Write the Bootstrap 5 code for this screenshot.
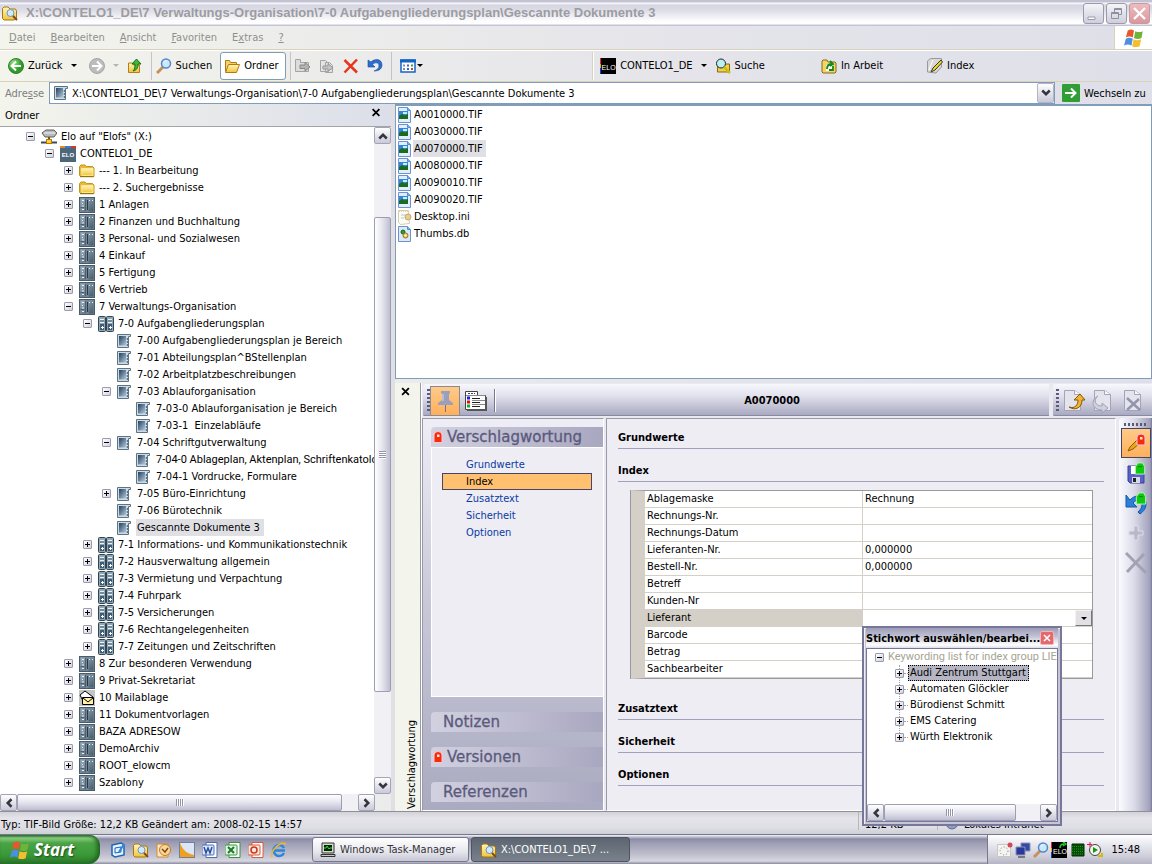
<!DOCTYPE html>
<html lang="de">
<head>
<meta charset="utf-8">
<meta name="viewport" content="width=device-width, initial-scale=1">
<title>Gescannte Dokumente 3</title>
<link href="https://cdn.jsdelivr.net/npm/bootstrap@5.3.0/dist/css/bootstrap.min.css" rel="stylesheet">
<style>
:root{--ui:"DejaVu Sans Condensed","DejaVu Sans",sans-serif;--blue:#7f9db9;--sand:#d8d2bd;}
body{font:11px/17px var(--ui);color:#000;background:linear-gradient(90deg,#f3f4ec 0%,#e4e4ea 60%,#dfdfe9 100%);height:100vh;overflow:hidden;white-space:nowrap}
button,select,input{font:inherit;color:inherit}
button{border:0;background:none;padding:0}
a{color:inherit;text-decoration:none}
ul{list-style:none;margin:0;padding:0}
svg{display:block;flex:none}
.ic{width:16px;height:16px}
.ic20{width:20px;height:20px}
.ic24{width:24px;height:24px}
.narrow{font-family:Roboto,sans-serif}
/* ELO logos: slate one in the tree, black one in the tool bar and the tray */
.elo{display:block;flex:none;text-align:center;color:#fff;font:bold 6px/18px "Liberation Sans",Arial,sans-serif;background:linear-gradient(90deg,#e58a1c 5px,#3c78d0 5px 11px,#d43a1c 11px) top/100% 2px no-repeat #4d6678}
.elo.dark{font:7px/20px "Liberation Sans",Arial,sans-serif;padding-left:1px;background:linear-gradient(#e02a2a 6px,#f0b000 6px 10px,#2038d0 10px) left/1px 100% no-repeat #000}
.elo.synced{position:relative}
.elo.synced svg{position:absolute;right:0;top:0}
/* window frame */
.titlebar{height:26px;padding:0 2px;background:linear-gradient(#c2c2d2 0,#c2c2d2 2px,#fff 3px,#d6d6e2 5px,#dcdce6 10px,#fdfdfe 21px,#fff 24px,#c4c4d6 25px);color:#9c9ca2;font:bold 13px/26px "Liberation Sans",Arial,sans-serif}
.titlebar .caption{padding-left:8px}
.titlebar .caps{gap:2px}
.capbtn{width:21px;height:21px;border:1px solid #9a9aae;border-radius:3px;background:linear-gradient(#f4f4f8,#cfcfdb)}
.capbtn.shut{background:linear-gradient(#eebcc0,#d9979c);border-color:#c69aa4}
.menubar{height:24px;border-bottom:1px solid var(--sand);box-shadow:0 1px 0 #fff;color:#8f8f8f}
.menubar ul{gap:15px;padding-left:9px}
.winflag{width:38px;background:#fff;border-left:1px solid var(--sand)}
.toolbar{height:32px;border-bottom:1px solid var(--sand)}
.toolbar .first{width:51.4%;padding-left:8px}
.toolbar .second{border-left:1px solid var(--sand);box-shadow:inset 1px 0 0 #fff;padding-left:7px}
.tb{height:28px;display:flex;align-items:center;gap:4px}
.tb.on{border:1px solid var(--blue);border-radius:3px;background:#fff;padding:0 6px 0 3px;margin-left:8px}
.tb.wide{margin-left:44px}
.vsep{width:1px;height:28px;background:#c3c3cb}
.caret{width:0;border:3px solid transparent;border-top-color:#000;border-bottom:0}
.caret.dim{border-top-color:#b5b5b5}
.caret.near{margin-left:-3px}
.address{height:22px}
.address label{width:49px;padding-left:5px;color:#7d7d7d}
.addrbox{border:1px solid var(--blue);background:#fff;height:22px}
.addrbox input{border:0;outline:0;background:none;min-width:0;padding:0 0 0 2px}
.drop{width:17px;height:20px;border:1px solid #b4b4c4;border-radius:2px;background:linear-gradient(#fff,#c9c9d8)}
.go{width:97px;padding-left:7px;gap:4px}
/* folder tree */
.folders{width:391px}
.folders h2{font:inherit;height:23px;line-height:24px;padding:0 7px 0 5px;margin:0;border-bottom:1px solid #a4a4a8;background:linear-gradient(90deg,#f3f4ec,#dcdfe9)}
.folders h2 button{height:17px}
.treebox{background:#fff;min-height:0}
.tree{overflow:hidden;padding-top:1px}
.tree li{height:17px;display:flex;align-items:center}
.tree li .ic{margin:0 3px 0 6px}
.tree a{padding:0 4px 0 1px}
.tree a.sel,.files a.sel{background:#dfdfe4}
.lv0{padding-left:26px}.lv1{padding-left:45px}.lv2{padding-left:64px}.lv3{padding-left:83px}.lv4{padding-left:102px}.lv5{padding-left:121px}
.pm{width:9px;height:9px;flex:none;border:1px solid #9a9ab0;border-radius:1px;background:linear-gradient(#000,#000) center/5px 1px no-repeat,linear-gradient(135deg,#fff,#d2d2dc)}
.pm.p{background:linear-gradient(#000,#000) center/5px 1px no-repeat,linear-gradient(#000,#000) center/1px 5px no-repeat,linear-gradient(135deg,#fff,#d2d2dc)}
.pm.n{visibility:hidden}
.sbtn{width:17px;height:17px;flex:none;display:grid;place-items:center;border:1px solid #a4a4b6;border-radius:2px;background:linear-gradient(#fff,#c9c9d9)}
.sbtn.up svg{rotate:180deg}.sbtn.left svg{rotate:90deg}.sbtn.right svg{rotate:-90deg}
.vs{width:17px;background:#f0f0f5}
.vs .gap1{flex:73}.vs .gap2{flex:85}
.vs .thumb{flex:474;border:1px solid #9e9eb2;border-radius:2px;background:linear-gradient(90deg,#fff,#e4e4ee 50%,#bebed2)}
.hs{height:17px;background:#f0f0f5}
.hs .thumb{border:1px solid #9e9eb2;border-radius:2px;background:linear-gradient(#fff,#e4e4ee 50%,#bebed2)}
.grip{width:8px;height:7px;background:repeating-linear-gradient(90deg,#9494a6 0 1px,#fff 1px 2px)}
.grip.h{width:7px;height:8px;background:repeating-linear-gradient(#9494a6 0 1px,#fff 1px 2px)}
.splitter{width:4px;flex:none;background:#e0dfe3}
/* file list */
.files{background:#fff;border:1px solid var(--blue);border-top-width:2px;overflow:hidden}
.files li{height:17px;display:flex;align-items:center;padding-left:1px}
.files a{padding:0 3px 0 1px}
/* document panel */
.docpanel{margin-top:4px}
.strip{width:25px;background:#f3f4ec}
.strip span{writing-mode:vertical-rl;transform:rotate(180deg);line-height:17px;margin-left:8px;margin-bottom:2px}
.panelwrap{border-left:1px solid #9a9aa6;box-shadow:inset 1px 0 0 #fff;padding-left:1px;background:#e9e9f2}
.bars{height:35px;padding:1px 0 1px 1px}
.bar{height:33px;border-radius:3px 0 0 3px;background:linear-gradient(#f7f7fd,#e2e2ee 35%,#a9a9c1 94%,#7d7d98 96%,#e9e9f2 98%)}
.bar .doctitle{font-weight:bold;margin-right:249px}
.bar .vsep{height:23px;background:#77778f;box-shadow:1px 0 0 #fff}
.bar.end{width:99px;margin-left:4px;padding-left:3px}
.dots{width:3px;height:24px;background:repeating-linear-gradient(#5a5a7a 0 2px,transparent 2px 4px)}
.dots.h{width:24px;height:3px;margin-bottom:2px;background:repeating-linear-gradient(90deg,#5a5a7a 0 2px,transparent 2px 4px)}
.tool{width:30px;height:30px;display:grid;place-items:center;flex:none}
.tool.on{border:1px solid #8a8a96;background:linear-gradient(#ffca88,#feb05c)}
.nav-side{width:182px;border:1px solid #fff;border-top-color:#9a9aa6;border-left-color:#9a9aa6;padding:8px 0 8px 8px;background:linear-gradient(#efeef6,#c9c9da 45%,#aaaac0)}
.nav-side h3{font:15px/22px "DejaVu Sans",Verdana,sans-serif;height:20px;margin:0;color:#5b5a7c;background:linear-gradient(90deg,#d2d1e0,#a8a7c0);border-radius:4px 0 0 0;padding-left:12px;display:flex;align-items:center;-webkit-text-stroke:.3px #5b5a7c}
.nav-side h3.locked{padding-left:2px}
.nav-side h3 svg{margin-right:4px}
.nav-side .links{border:1px solid #fff;border-right:0;background:#eeedf4;padding:8px 11px 0 10px;margin-bottom:15px}
.nav-side .links a{display:block;height:17px;line-height:17px;padding-left:24px;color:#0a3aa4}
.nav-side .links a.cur{border:1px solid #45456a;padding-left:23px;line-height:15px;background:#ffc070;color:#000}
.nav-side .stack{gap:15px}
.details{margin-left:2px;border:1px solid #fff;border-top-color:#9a9aa6;border-left-color:#9a9aa6;background:#eeedf4;padding:7px 11px 24px 11px}
.details h4{font:bold 11px/24px var(--ui);height:23px;margin:0 0 10px;border-bottom:1px solid #a2a1bd}
.props{width:calc(100% - 24px);margin:-2px 0 18px 13px;border-collapse:separate;border-spacing:0;border:1px solid #9a9a9e;border-left:14px solid #d4d0c8;table-layout:fixed;background:#fff;box-shadow:-1px 0 0 #9a9a9e}
.props th,.props td{height:17px;line-height:16px;padding:0 0 0 2px;font-weight:normal;border-bottom:1px solid #d4d0c8}
.props th{width:218px;border-right:1px solid #d4d0c8}
.props tr.cur th{background:#d4d0c8}
.props select{appearance:none;width:100%;height:16px;border:0;border-radius:0;padding:0;outline:0;background:#fff}
.props .combo{position:relative}
.props .knob{position:absolute;right:0;top:0;width:17px;height:16px;display:grid;place-items:center;pointer-events:none;background:#e2e0e4;border:1px solid;border-color:#f2f2f2 #77777c #77777c #f2f2f2}
.side-tools{width:33px;margin-left:3px;padding-top:5px;border-radius:4px 0 0 0;background:linear-gradient(90deg,#fafaff,#dcdce9 45%,#a0a0ba 94%,#77779a)}
.side-tools .tool.on{border-color:#45456a}
/* status bar and taskbar */
.status{height:23px;border-top:1px solid #8f8f98;background:linear-gradient(#d2d2d8,#e4e4ea 6px,#dedee5 70%,#cfcfd6)}
.status .hint{padding-left:1px}
.status .cell{border-left:1px solid #bdb9a8;padding-left:6px;height:18px}
.status .size{width:79px}.status .zone{width:215px}
.taskbar{height:30px;border-top:1px solid #77778f;background:linear-gradient(#f3f3f8 0,#8b8ba6 4px,#9e9eb4 8px,#c0c0cf 20px,#d8d8e0 26px,#8888a0 29px)}
.start{width:100px;height:29px;border-radius:0 10px 12px 0;background:linear-gradient(#2f7a2d 0,#8ed083 3px,#4aa445 8px,#3a9837 20px,#2c7a2b 28px);box-shadow:inset -3px 0 4px #1f6420;color:#fff;font:italic bold 17px/26px "Open Sans",sans-serif;text-shadow:1px 1px 2px #1a4a1a;padding-left:10px;gap:4px}
.quick{gap:7px;padding-left:10px;width:212px}
.task{width:157px;height:25px;border:1px solid #77778c;border-radius:3px;background:linear-gradient(#fff,#e6e6ee 60%,#c6c6d4);gap:4px;padding-left:7px;color:#333;margin-right:2px}
.task.act{width:159px;background:linear-gradient(#5c6570,#79828c);border-color:#4c5560;color:#fff;padding-left:9px}
.tray{border-left:1px solid #77778f;background:linear-gradient(#fff,#eaeaf1 30%,#cdcdd9 75%,#b4b4c4);padding:0 12px 0 9px;gap:2px}
.tray time{margin-left:6px}
/* keyword window */
.keywords{position:absolute;right:90px;bottom:38px;width:200px;height:200px;border:2px solid #77779a;background:#c6c6d6;padding:0 2px 2px;box-shadow:inset 1px 1px 0 #eeeef6}
.keywords header{height:20px;font-weight:bold;background:linear-gradient(#9c9cb8,#c0c0d2 8px,#fff 17px,#dcdce8)}
.keywords .shut{width:14px;height:14px;border:1px solid #f5b5b5;border-radius:2px;background:#e4686c;color:#fff;display:grid;place-items:center}
.keywords .body{border:1px solid #77779a;background:#fff;overflow:hidden}
.keywords li{height:16px;line-height:16px;display:flex;align-items:center}
.keywords .root{color:#a5a493}
.keywords .subs{position:relative;margin-left:20px}
.keywords .subs::before{content:"";position:absolute;left:4px;top:0;height:72px;border-left:1px dotted #a4a4a4}
.keywords .subs li::after{content:"";order:1;width:4px;border-top:1px dotted #a4a4a4}
.keywords .subs .pm{position:relative}
.keywords .subs a{order:2;padding:0 3px 0 2px;height:16px;line-height:15px}
.keywords .subs a.sel{background:#b5b5c3;outline:1px dotted #000;outline-offset:-1px}
</style>
</head>
<body class="d-flex flex-column">
<svg width="0" height="0" class="position-absolute" aria-hidden="true">
<defs>
<linearGradient id="gy" x1="0" y1="0" x2="0" y2="1"><stop offset="0" stop-color="#fff6b8"/><stop offset="1" stop-color="#f2c33c"/></linearGradient>
<linearGradient id="gs" x1="0" y1="0" x2="1" y2="1"><stop offset="0" stop-color="#9fb4c2"/><stop offset="1" stop-color="#46596a"/></linearGradient>
<linearGradient id="gd" x1="0" y1="0" x2="1" y2="1"><stop offset="0" stop-color="#24405c"/><stop offset="1" stop-color="#b4c8da"/></linearGradient>
<radialGradient id="gg" cx=".35" cy=".3"><stop offset="0" stop-color="#9be08a"/><stop offset="1" stop-color="#2e9a2a"/></radialGradient>
</defs>
<symbol id="fold" viewBox="0 0 16 16"><path d="M.5 12.500V3.500l1.500-1.500h4l1.500 1.500h6l1.500 1.500v8.500H1.500z" fill="#e8b93a" stroke="#c2951f"/><path d="M2.500 5.500h11.500v7H3z" fill="url(#gy)" stroke="#fff3a0" stroke-width=".8"/><path d="M1 13.700h13.500" stroke="#8a6a10"/></symbol>
<symbol id="cab" viewBox="0 0 16 16"><rect x=".5" y=".5" width="15" height="15" fill="#6f8798" stroke="#4a5c6a"/><path d="M1.500 1.500h5v13h-5zM9.500 1.500h5v13h-5z" fill="url(#gs)"/><path d="M8.500 3v10" stroke="#2a3844"/><path d="M6.500 2v12M1.500 10.500h4" stroke="#4c6070"/><path d="M3 3.500h2M3 6.500h1M3 12.500h2M10 3.500h1M13 3.500h1M3 9h2" stroke="#e8f0f6"/></symbol>
<symbol id="reg" viewBox="0 0 16 16"><rect x=".5" y=".5" width="7" height="15" rx="1" fill="#8fa6b5" stroke="#33444f"/><rect x="8.500" y=".5" width="7" height="15" rx="1" fill="#8fa6b5" stroke="#33444f"/><path d="M2 3.500h4M2 6.500h4M10 3.500h4M10 6.500h4" stroke="#e8f2f8"/><path d="M2 5h4M10 5h4" stroke="#5a7080"/><path d="M2 8h4v6H2zM10 8h4v6h-4z" fill="#3f5c78"/><path d="M3 11.500h3M4.500 10v3M11 11.500h3M12.500 10v3" stroke="#fff"/></symbol>
<symbol id="doc" viewBox="0 0 16 16"><path d="M.5 1.500h13v2h-2v11H.5z" fill="#c9dcea" stroke="#5f7282"/><path d="M2 3h7v9.500H2z" fill="url(#gd)"/><path d="M10.500 5v9" stroke="#5d7384" stroke-width="1.500" stroke-dasharray="2 1"/></symbol>
<symbol id="drive" viewBox="0 0 16 16"><path d="M1 4l4-3h8l3 3-3 4H4z" fill="#b9b9b9" stroke="#5c5c5c"/><path d="M3 4h11" stroke="#f2f2f2"/><path d="M8 8v4" stroke="#555" stroke-width="2"/><path d="M0 13.500h16" stroke="#3a4a5a" stroke-width="2"/><rect x="5.500" y="10.500" width="5" height="4" fill="#ffcf30" stroke="#b07c00"/></symbol>
<symbol id="mail" viewBox="0 0 16 16"><path d="M0 0h16v16H0z" fill="#c4c4c4"/><path d="M1 5l5-4 8 6-3 4H4z" fill="#fff" stroke="#000"/><path d="M3.500 7.500h11v7h-11z" fill="#fff2a8" stroke="#000"/><path d="M4 8l5 4 5-4" fill="none" stroke="#000"/></symbol>
<symbol id="tif" viewBox="0 0 16 16"><path d="M1.500.5h9l3 3v12h-12z" fill="#e2edfd" stroke="#6f92cc"/><path d="M10.500.5v3h3" fill="#6fb8ff" stroke="#4c90dc"/><path d="M2 4h9v8H2z" fill="#2f86dc"/><path d="M2 9l3-2 3 1.500 3-1.500v5H2z" fill="#1c6b1c"/><path d="M6 5h4v2H6z" fill="#c9ecff"/></symbol>
<symbol id="ini" viewBox="0 0 16 16"><path d="M1.500 1.500h10l1 13-9 1-2-2z" fill="#fdfcf4" stroke="#d4ccb8"/><path d="M2 2h9" stroke="#e3cf8e" stroke-dasharray="1 1" stroke-width="2"/><circle cx="11" cy="8" r="3" fill="#e6cc98" stroke="#c6a868"/><path d="M4 6h4M4 9h3" stroke="#b8c4dc"/></symbol>
<symbol id="db" viewBox="0 0 16 16"><path d="M1.500.5h9l3 3v12h-12z" fill="#dce9fc" stroke="#6f92cc"/><path d="M10.500.5v3h3" fill="#6fb8ff" stroke="#4c90dc"/><circle cx="6" cy="6" r="2" fill="#2f9a2f" stroke="#14661a"/><circle cx="8.500" cy="9.500" r="2.500" fill="#ecc94a" stroke="#98741c"/><circle cx="8.500" cy="9.500" r="1" fill="#fff"/></symbol>
<symbol id="mag" viewBox="0 0 16 16"><path d="M1 15l6-6" stroke="#c98f5a" stroke-width="3"/><circle cx="10" cy="5.500" r="4.500" fill="#c9e8fb" stroke="#5a86c8" stroke-width="1.500"/><path d="M8 4.500l2-2" stroke="#fff"/></symbol>
<symbol id="foldmag" viewBox="0 0 16 16"><path d="M.5 13.500v-10l1.500-1.500h4l2 2h5.500l1 2v7l-2 2H2z" fill="url(#gy)" stroke="#a8770f"/><circle cx="8.500" cy="8" r="3.500" fill="#cfeafd" stroke="#6c95c4"/><path d="M11 11l4 4" stroke="#7c4b1c" stroke-width="2"/></symbol>
<symbol id="open" viewBox="0 0 16 16"><path d="M1.500 13.500V2.500h4l1 2h6v2" fill="#f4d268" stroke="#b37a12"/><path d="M1.500 14.500l3-8h11l-3 8z" fill="url(#gy)" stroke="#b37a12"/></symbol>
<symbol id="up" viewBox="0 0 16 16"><path d="M1.500 14.500V5h4l1 2h6v7.500z" fill="url(#gy)" stroke="#b08018"/><path d="M6 13c4-1 5-3 5-7h3l-4.500-5L5 6h3c0 3 0 5-2 7z" fill="#43b838" stroke="#177014"/></symbol>
<symbol id="undo" viewBox="0 0 16 16"><path d="M1 2v7h7L5.500 6.500C8 4 12 4 12 8c0 2-2 4-5 5 6 0 8-3 8-6 0-6-7-7-11-3z" fill="#2c6ed0" stroke="#174a9c" stroke-width=".6"/></symbol>
<symbol id="win" viewBox="0 0 16 16"><path d="M3 2c2-1 3-1 5 0l-1 5.500c-2-1-3-1-5.500 0z" fill="#e8562a"/><path d="M9 2.500c2 1 4 1 6 0L14 8c-2 1-4 1-6 0z" fill="#6fb33c"/><path d="M1.500 8.500c2-1 3-1 5.500 0L6 14c-2-1-4-1-6 0z" fill="#4a8fe0"/><path d="M7.700 9c2 1 4 1 6 0l-1.200 5.500c-2 1-4 1-6 0z" fill="#f4bf2e"/></symbol>
<symbol id="lock" viewBox="0 0 10 12"><path d="M1 11.500V4q0-3.500 4-3.500T9 4v7.500z" fill="#f42c08" stroke="#ffc4dc"/><path d="M4 3.500h2.500V6H4z" fill="#ffe0ea"/></symbol>
<symbol id="cx" viewBox="0 0 8 8"><path d="M1 1l6 6M7 1L1 7" stroke="currentColor" stroke-width="1.600"/></symbol>
<symbol id="ch" viewBox="0 0 8 6"><path d="M1 1l3 3 3-3" fill="none" stroke="#35353f" stroke-width="2"/></symbol>
<symbol id="paper" viewBox="0 0 24 24"><path d="M2.500 1.500h10l6 4v16h-16z" fill="#e4e4ec" stroke="#a4a4b8"/><path d="M12.500 1.500v4h6" fill="#f8f8fc" stroke="#a4a4b8"/></symbol>
<symbol id="ulock" viewBox="0 0 12 14"><path d="M1 13V5l3-4h5l2 4v8z" fill="#10c810" stroke="#b8f8b8"/><path d="M4 5h4" stroke="#087a08"/></symbol>
</svg>

<header class="titlebar d-flex align-items-center">
  <svg class="ic"><use href="#foldmag"/></svg>
  <span class="caption flex-grow-1">X:\CONTELO1_DE\7 Verwaltungs-Organisation\7-0 Aufgabengliederungsplan\Gescannte Dokumente 3</span>
  <div class="caps d-flex">
    <button class="capbtn" aria-label="Minimieren"><svg width="19" height="19"><path d="M4 13h7v2.500H4z" fill="#fff" stroke="#9a9aae"/></svg></button>
    <button class="capbtn" aria-label="Wiederherstellen"><svg width="19" height="19" fill="none" stroke="#8f8fa2"><path d="M7.500 8V4.500h7v6H12M7 5.500h8M4.500 8.500h7v6h-7zM4 9.500h8"/></svg></button>
    <button class="capbtn shut" aria-label="Schließen"><svg width="19" height="19"><path d="M4 4l11 11M15 4L4 15" stroke="#fff" stroke-width="2.400"/></svg></button>
  </div>
</header>

<nav class="menubar d-flex justify-content-between">
  <ul class="d-flex align-items-center">
    <li><a href="#"><u>D</u>atei</a></li><li><a href="#"><u>B</u>earbeiten</a></li><li><a href="#"><u>A</u>nsicht</a></li><li><a href="#"><u>F</u>avoriten</a></li><li><a href="#">E<u>x</u>tras</a></li><li><a href="#"><u>?</u></a></li>
  </ul>
  <div class="winflag d-flex align-items-center justify-content-center"><svg class="ic20"><use href="#win"/></svg></div>
</nav>

<div class="toolbar d-flex align-items-center">
  <div class="first d-flex align-items-center">
    <button class="tb"><svg class="ic" viewBox="0 0 16 16"><circle cx="8" cy="8" r="7.500" fill="url(#gg)" stroke="#2c8428"/><path d="M13 8H4M8 3.500L3.500 8 8 12.500" fill="none" stroke="#fff" stroke-width="2"/></svg>Zurück</button>
    <span class="caret ms-2"></span>
    <button class="tb ms-2 ps-1" aria-label="Vorwärts"><svg class="ic" viewBox="0 0 16 16"><circle cx="8" cy="8" r="7.500" fill="#bcbcbc" stroke="#a6a6a6"/><path d="M3 8h9M8 3.500L12.500 8 8 12.500" fill="none" stroke="#fff" stroke-width="2"/></svg></button>
    <span class="caret dim ms-2"></span>
    <button class="tb ms-2" aria-label="Aufwärts"><svg class="ic"><use href="#up"/></svg></button>
    <span class="vsep ms-2"></span>
    <button class="tb ms-1"><svg class="ic"><use href="#mag"/></svg>Suchen</button>
    <button class="tb on"><svg class="ic"><use href="#open"/></svg>Ordner</button>
    <span class="vsep ms-1"></span>
    <button class="tb ms-1" aria-label="Verschieben"><svg class="ic" viewBox="0 0 16 16"><path d="M.5 1.500h5v3h8v9H.5z" fill="#dcdcdc" stroke="#a4a4a4"/><path d="M5 7h5V4.500L15 9l-5 4v-2.500H5z" fill="#b4b4b4" stroke="#888"/></svg></button>
    <button class="tb ms-2" aria-label="Kopieren"><svg class="ic" viewBox="0 0 16 16"><path d="M1.500 2.500h5l3 3v8h-8zM6.500 4.500h4l3 3v7h-7z" fill="#e4e4e4" stroke="#a4a4a4"/><path d="M4 8h5V5.500L14 10l-5 3v-2H4z" fill="#c4c4c4" stroke="#969696"/></svg></button>
    <button class="tb ms-2" aria-label="Löschen"><svg class="ic" viewBox="0 0 16 16"><path d="M1.500 2L14 14.500M14 1.500L1.500 14.500" stroke="#e8341a" stroke-width="2.500"/></svg></button>
    <button class="tb ms-2" aria-label="Rückgängig"><svg class="ic"><use href="#undo"/></svg></button>
    <span class="vsep ms-2"></span>
    <button class="tb ms-2" aria-label="Ansichten"><svg class="ic" viewBox="0 0 16 16"><rect x="1" y="2" width="14" height="12" fill="#fff" stroke="#1264c8" stroke-width="1.500"/><path d="M0 3h16" stroke="#1264c8" stroke-width="3"/><path d="M3 7.500h2M3 11h2" stroke="#7c8cb4" stroke-width="2"/><path d="M7 7.500h2M7 11h2" stroke="#3a62c4" stroke-width="2"/><path d="M11 7.500h2" stroke="#3c9c3c" stroke-width="2"/><path d="M11 11h2" stroke="#d04020" stroke-width="2"/></svg><span class="caret near"></span></button>
  </div>
  <div class="second d-flex align-items-center flex-grow-1">
    <button class="tb"><span class="ic elo dark">ELO</span>CONTELO1_DE</button>
    <span class="caret ms-2 me-2"></span>
    <button class="tb"><svg class="ic" viewBox="0 0 16 16"><path d="M2.500 14V4h5l1 2h6v8z" fill="#f0cf50" stroke="#8c6a10"/><circle cx="6" cy="5.500" r="4.500" fill="#b8f0f4" stroke="#222"/><path d="M9 9l6 6" stroke="#c8c010" stroke-width="2.500"/></svg>Suche</button>
    <button class="tb ms-5 ps-2"><svg class="ic" viewBox="0 0 16 16"><path d="M1 14V3l1-1h4l1 2h7l1 1v9l-1 1H2z" fill="#f2d468" stroke="#8c6a10"/><path d="M5 7h7v6H5z" fill="#fff"/><path d="M6 11c0-4 2-5 5-5M9 3l3 3-3 2M12 8v4H8" fill="none" stroke="#108a18" stroke-width="1.800"/></svg>In Arbeit</button>
    <button class="tb wide"><svg class="ic" viewBox="0 0 16 16"><path d="M.5 14V3l3-2.500h11V9L9 15z" fill="#d8d8d8" stroke="#9a9a9a"/><path d="M4 14l2-4 8-8 1.500 2L8 12z" fill="#f0d820" stroke="#333"/><path d="M2 12L6 2" stroke="#fff"/></svg>Index</button>
  </div>
</div>

<div class="address d-flex align-items-center">
  <label for="addr">Adre<u>s</u>se</label>
  <div class="addrbox d-flex align-items-center flex-grow-1"><svg class="ic ms-1"><use href="#doc"/></svg><input id="addr" class="flex-grow-1" value="X:\CONTELO1_DE\7 Verwaltungs-Organisation\7-0 Aufgabengliederungsplan\Gescannte Dokumente 3"><button class="drop d-grid align-items-center justify-content-center" aria-label="Adressen"><svg width="10" height="8"><use href="#ch"/></svg></button></div>
  <button class="go d-flex align-items-center"><svg width="18" height="18"><rect width="18" height="18" rx="1" fill="#2f9e35"/><path d="M3 9h10M9 4.500L13.500 9 9 13.500" fill="none" stroke="#fff" stroke-width="2"/></svg>Wechseln zu</button>
</div>

<main class="d-flex flex-grow-1">
  <section class="folders d-flex flex-column flex-shrink-0">
    <h2 class="d-flex justify-content-between"><span>Ordner</span><button aria-label="Ordner schließen"><svg width="16" height="9"><use href="#cx"/></svg></button></h2>
    <div class="treebox d-flex flex-grow-1 overflow-hidden">
      <ul class="tree flex-grow-1">
        <li class="lv0"><button class="pm" aria-label="Zuklappen"></button><svg class="ic"><use href="#drive"/></svg><a href="#">Elo auf "Elofs" (X:)</a></li>
        <li class="lv1"><button class="pm" aria-label="Zuklappen"></button><span class="ic elo">ELO</span><a href="#">CONTELO1_DE</a></li>
        <li class="lv2"><button class="pm p" aria-label="Aufklappen"></button><svg class="ic"><use href="#fold"/></svg><a href="#">--- 1. In Bearbeitung</a></li>
        <li class="lv2"><button class="pm p" aria-label="Aufklappen"></button><svg class="ic"><use href="#fold"/></svg><a href="#">--- 2. Suchergebnisse</a></li>
        <li class="lv2"><button class="pm p" aria-label="Aufklappen"></button><svg class="ic"><use href="#cab"/></svg><a href="#">1 Anlagen</a></li>
        <li class="lv2"><button class="pm p" aria-label="Aufklappen"></button><svg class="ic"><use href="#cab"/></svg><a href="#">2 Finanzen und Buchhaltung</a></li>
        <li class="lv2"><button class="pm p" aria-label="Aufklappen"></button><svg class="ic"><use href="#cab"/></svg><a href="#">3 Personal- und Sozialwesen</a></li>
        <li class="lv2"><button class="pm p" aria-label="Aufklappen"></button><svg class="ic"><use href="#cab"/></svg><a href="#">4 Einkauf</a></li>
        <li class="lv2"><button class="pm p" aria-label="Aufklappen"></button><svg class="ic"><use href="#cab"/></svg><a href="#">5 Fertigung</a></li>
        <li class="lv2"><button class="pm p" aria-label="Aufklappen"></button><svg class="ic"><use href="#cab"/></svg><a href="#">6 Vertrieb</a></li>
        <li class="lv2"><button class="pm" aria-label="Zuklappen"></button><svg class="ic"><use href="#cab"/></svg><a href="#">7 Verwaltungs-Organisation</a></li>
        <li class="lv3"><button class="pm" aria-label="Zuklappen"></button><svg class="ic"><use href="#reg"/></svg><a href="#">7-0 Aufgabengliederungsplan</a></li>
        <li class="lv4"><span class="pm n"></span><svg class="ic"><use href="#doc"/></svg><a href="#">7-00 Aufgabengliederungsplan je Bereich</a></li>
        <li class="lv4"><span class="pm n"></span><svg class="ic"><use href="#doc"/></svg><a href="#">7-01 Abteilungsplan^BStellenplan</a></li>
        <li class="lv4"><span class="pm n"></span><svg class="ic"><use href="#doc"/></svg><a href="#">7-02 Arbeitplatzbeschreibungen</a></li>
        <li class="lv4"><button class="pm" aria-label="Zuklappen"></button><svg class="ic"><use href="#doc"/></svg><a href="#">7-03 Ablauforganisation</a></li>
        <li class="lv5"><span class="pm n"></span><svg class="ic"><use href="#doc"/></svg><a href="#">7-03-0 Ablauforganisation je Bereich</a></li>
        <li class="lv5"><span class="pm n"></span><svg class="ic"><use href="#doc"/></svg><a href="#">7-03-1 &nbsp;Einzelabläufe</a></li>
        <li class="lv4"><button class="pm" aria-label="Zuklappen"></button><svg class="ic"><use href="#doc"/></svg><a href="#">7-04 Schriftgutverwaltung</a></li>
        <li class="lv5"><span class="pm n"></span><svg class="ic"><use href="#doc"/></svg><a href="#" class="narrow">7-04-0 Ablageplan, Aktenplan, Schriftenkatolog</a></li>
        <li class="lv5"><span class="pm n"></span><svg class="ic"><use href="#doc"/></svg><a href="#">7-04-1 Vordrucke, Formulare</a></li>
        <li class="lv4"><button class="pm p" aria-label="Aufklappen"></button><svg class="ic"><use href="#doc"/></svg><a href="#">7-05 Büro-Einrichtung</a></li>
        <li class="lv4"><span class="pm n"></span><svg class="ic"><use href="#doc"/></svg><a href="#">7-06 Bürotechnik</a></li>
        <li class="lv4"><span class="pm n"></span><svg class="ic"><use href="#doc"/></svg><a href="#" class="sel">Gescannte Dokumente 3</a></li>
        <li class="lv3"><button class="pm p" aria-label="Aufklappen"></button><svg class="ic"><use href="#reg"/></svg><a href="#">7-1 Informations- und Kommunikationstechnik</a></li>
        <li class="lv3"><button class="pm p" aria-label="Aufklappen"></button><svg class="ic"><use href="#reg"/></svg><a href="#">7-2 Hausverwaltung allgemein</a></li>
        <li class="lv3"><button class="pm p" aria-label="Aufklappen"></button><svg class="ic"><use href="#reg"/></svg><a href="#">7-3 Vermietung und Verpachtung</a></li>
        <li class="lv3"><button class="pm p" aria-label="Aufklappen"></button><svg class="ic"><use href="#reg"/></svg><a href="#">7-4 Fuhrpark</a></li>
        <li class="lv3"><button class="pm p" aria-label="Aufklappen"></button><svg class="ic"><use href="#reg"/></svg><a href="#">7-5 Versicherungen</a></li>
        <li class="lv3"><button class="pm p" aria-label="Aufklappen"></button><svg class="ic"><use href="#reg"/></svg><a href="#">7-6 Rechtangelegenheiten</a></li>
        <li class="lv3"><button class="pm p" aria-label="Aufklappen"></button><svg class="ic"><use href="#reg"/></svg><a href="#">7-7 Zeitungen und Zeitschriften</a></li>
        <li class="lv2"><button class="pm p" aria-label="Aufklappen"></button><svg class="ic"><use href="#cab"/></svg><a href="#">8 Zur besonderen Verwendung</a></li>
        <li class="lv2"><button class="pm p" aria-label="Aufklappen"></button><svg class="ic"><use href="#cab"/></svg><a href="#">9 Privat-Sekretariat</a></li>
        <li class="lv2"><button class="pm p" aria-label="Aufklappen"></button><svg class="ic"><use href="#mail"/></svg><a href="#">10 Mailablage</a></li>
        <li class="lv2"><button class="pm p" aria-label="Aufklappen"></button><svg class="ic"><use href="#cab"/></svg><a href="#">11 Dokumentvorlagen</a></li>
        <li class="lv2"><button class="pm p" aria-label="Aufklappen"></button><svg class="ic"><use href="#cab"/></svg><a href="#">BAZA ADRESOW</a></li>
        <li class="lv2"><button class="pm p" aria-label="Aufklappen"></button><svg class="ic"><use href="#cab"/></svg><a href="#">DemoArchiv</a></li>
        <li class="lv2"><button class="pm p" aria-label="Aufklappen"></button><svg class="ic"><use href="#cab"/></svg><a href="#">ROOT_elowcm</a></li>
        <li class="lv2"><button class="pm p" aria-label="Aufklappen"></button><svg class="ic"><use href="#cab"/></svg><a href="#">Szablony</a></li>
      </ul>
      <div class="vs d-flex flex-column flex-shrink-0">
        <button class="sbtn up" aria-label="Nach oben"><svg width="10" height="8"><use href="#ch"/></svg></button>
        <span class="gap1"></span>
        <div class="thumb d-flex align-items-center justify-content-center"><span class="grip h"></span></div>
        <span class="gap2"></span>
        <button class="sbtn" aria-label="Nach unten"><svg width="10" height="8"><use href="#ch"/></svg></button>
      </div>
    </div>
    <div class="hs d-flex me-3">
      <button class="sbtn left" aria-label="Nach links"><svg width="10" height="8"><use href="#ch"/></svg></button>
      <div class="thumb d-flex align-items-center justify-content-center flex-grow-1"><span class="grip"></span></div>
      <span class="ps-3"></span>
      <button class="sbtn right" aria-label="Nach rechts"><svg width="10" height="8"><use href="#ch"/></svg></button>
    </div>
  </section>
  <div class="splitter"></div>

  <div class="d-flex flex-column flex-grow-1 overflow-hidden">
    <ul class="files flex-grow-1">
      <li><svg class="ic"><use href="#tif"/></svg><a href="#">A0010000.TIF</a></li>
      <li><svg class="ic"><use href="#tif"/></svg><a href="#">A0030000.TIF</a></li>
      <li><svg class="ic"><use href="#tif"/></svg><a href="#" class="sel">A0070000.TIF</a></li>
      <li><svg class="ic"><use href="#tif"/></svg><a href="#">A0080000.TIF</a></li>
      <li><svg class="ic"><use href="#tif"/></svg><a href="#">A0090010.TIF</a></li>
      <li><svg class="ic"><use href="#tif"/></svg><a href="#">A0090020.TIF</a></li>
      <li><svg class="ic"><use href="#ini"/></svg><a href="#">Desktop.ini</a></li>
      <li><svg class="ic"><use href="#db"/></svg><a href="#">Thumbs.db</a></li>
    </ul>
    <section class="docpanel d-flex">
      <div class="strip d-flex flex-column justify-content-between flex-shrink-0"><button class="pt-1 ps-1" aria-label="Leiste schließen"><svg width="13" height="9"><use href="#cx"/></svg></button><span>Verschlagwortung</span></div>
      <div class="panelwrap flex-grow-1 d-flex flex-column">
        <div class="bars d-flex">
          <div class="bar d-flex align-items-center flex-grow-1 ps-1">
            <span class="dots"></span>
            <button class="tool on" aria-label="Anheften"><svg class="ic24" viewBox="0 0 24 24"><path d="M8 2h9v2l-1 1v6l4 3v2H5v-2l4-3V5L8 4z" fill="#9aa0bc"/><path d="M10 5v7" stroke="#d4d8e8"/><path d="M12.500 16v7" stroke="#6c7490"/></svg></button>
            <button class="tool" aria-label="Maske"><svg class="ic24" viewBox="0 0 24 24"><path d="M2.500 2.500h12v4h8v14h-20z" fill="#fff" stroke="#444"/><path d="M23 8v13H4" fill="none" stroke="#555" stroke-width="2"/><path d="M3 6.500h19M9 11.500h13M9 15.500h13" stroke="#888"/><path d="M5 4.500h7" stroke="#444" stroke-dasharray="2 1"/><path d="M4 9h3" stroke="#1020f0" stroke-width="3"/><path d="M4 13h3" stroke="#e01010" stroke-width="3"/><path d="M4 17h3" stroke="#10b020" stroke-width="3"/><path d="M9 9.500h8M9 13.500h8M9 17.500h8" stroke="#222"/></svg></button>
            <span class="vsep ms-1"></span>
            <span class="doctitle flex-grow-1 text-end">A0070000</span>
          </div>
          <div class="bar end d-flex align-items-center flex-shrink-0">
            <span class="dots"></span>
            <button class="tool" aria-label="Öffnen"><svg class="ic24" viewBox="0 0 24 24"><use href="#paper"/><path d="M7 18c6 2 9-2 9-7h-4l6-6 5 6h-3c0 8-7 11-13 7z" fill="#f0b430" stroke="#85560a"/></svg></button>
            <button class="tool" aria-label="Wiederherstellen"><svg class="ic24" viewBox="0 0 24 24"><use href="#paper"/><path d="M6 7c-5 4-3 10 4 10v-3l6 5-6 5v-3C0 21-2 11 6 7z" fill="#d0d0de" stroke="#a0a0b8"/></svg></button>
            <button class="tool" aria-label="Verwerfen"><svg class="ic24" viewBox="0 0 24 24"><use href="#paper"/><path d="M5 9l13 12M17 10L5 21" stroke="#9494ac" stroke-width="2.500"/></svg></button>
          </div>
        </div>
        <div class="d-flex flex-grow-1">
          <aside class="nav-side d-flex flex-column flex-shrink-0">
            <h3 class="locked"><svg width="10" height="12"><use href="#lock"/></svg>Verschlagwortung</h3>
            <div class="links flex-grow-1"><a href="#">Grundwerte</a><a href="#" class="cur">Index</a><a href="#">Zusatztext</a><a href="#">Sicherheit</a><a href="#">Optionen</a></div>
            <div class="stack d-flex flex-column"><h3>Notizen</h3><h3 class="locked"><svg width="10" height="12"><use href="#lock"/></svg>Versionen</h3><h3>Referenzen</h3></div>
          </aside>
          <article class="details flex-grow-1">
            <h4>Grundwerte</h4>
            <h4>Index</h4>
            <table class="props">
              <tbody>
              <tr><th scope="row">Ablagemaske</th><td>Rechnung</td></tr>
              <tr><th scope="row">Rechnungs-Nr.</th><td></td></tr>
              <tr><th scope="row">Rechnungs-Datum</th><td></td></tr>
              <tr><th scope="row">Lieferanten-Nr.</th><td>0,000000</td></tr>
              <tr><th scope="row">Bestell-Nr.</th><td>0,000000</td></tr>
              <tr><th scope="row">Betreff</th><td></td></tr>
              <tr><th scope="row">Kunden-Nr</th><td></td></tr>
              <tr class="cur"><th scope="row"><label for="lief">Lieferant</label></th><td class="p-0"><div class="combo d-flex"><select id="lief"><option></option></select><span class="knob"><i class="caret"></i></span></div></td></tr>
              <tr><th scope="row">Barcode</th><td></td></tr>
              <tr><th scope="row">Betrag</th><td></td></tr>
              <tr><th scope="row">Sachbearbeiter</th><td></td></tr>
              </tbody>
            </table>
            <h4>Zusatztext</h4>
            <h4>Sicherheit</h4>
            <h4 class="mb-0">Optionen</h4>
          </article>
          <div class="side-tools d-flex flex-column align-items-center flex-shrink-0">
            <span class="dots h"></span>
            <button class="tool on" aria-label="Sperre"><svg class="ic24" viewBox="0 0 24 24"><path d="M4 20l2-4 8-8 3 3-8 7z" fill="#e8a818" stroke="#8a5a08"/><svg x="12" y="2" width="10" height="13"><use href="#lock"/></svg></svg></button>
            <button class="tool" aria-label="Speichern"><svg class="ic24" viewBox="0 0 24 24"><path d="M4 5h16v17H6l-2-2z" fill="#5a62c8" stroke="#3a3f94"/><path d="M7 5h10v8H7z" fill="#fff"/><path d="M8 16h8v6H8z" fill="#d8d8e8"/><path d="M9 17h3v4H9z" fill="#222"/><svg x="10" y="1" width="12" height="13"><use href="#ulock"/></svg></svg></button>
            <button class="tool" aria-label="Zurücksetzen"><svg class="ic24" viewBox="0 0 24 24"><path d="M2 4v12h11l-4-4c3-4 9-3 9 2 0 3-2 5-4 7l2 2c4-3 6-6 6-10 0-8-10-11-16-4z" fill="#2a7fd8" stroke="#1458a4"/><svg x="11" y="1" width="12" height="13"><use href="#ulock"/></svg></svg></button>
            <button class="tool" aria-label="Hinzufügen"><svg class="ic24" viewBox="0 0 24 24"><path d="M10 5h4v5h5v4h-5v5h-4v-5H5v-4h5z" fill="#b8b8ca" stroke="#dcdce8"/></svg></button>
            <button class="tool" aria-label="Entfernen"><svg class="ic24" viewBox="0 0 24 24"><path d="M2 2l20 20M20 3L3 21" stroke="#a2a2b4" stroke-width="3"/></svg></button>
          </div>
        </div>
      </div>
    </section>
  </div>
</main>

<footer class="status d-flex flex-shrink-0">
  <span class="hint flex-grow-1 pt-1">Typ: TIF-Bild Größe: 12,2 KB Geändert am: 2008-02-15 14:57</span>
  <span class="cell size pt-1">12,2 KB</span>
  <span class="cell zone pt-1 d-flex gap-1"><svg class="ic" viewBox="0 0 16 16"><circle cx="8" cy="7" r="6" fill="#8c9cc8" stroke="#6a6a98"/></svg>Lokales Intranet</span>
</footer>

<div class="taskbar d-flex align-items-center flex-shrink-0">
  <button class="start d-flex align-items-center"><svg class="ic20"><use href="#win"/></svg>Start</button>
  <div class="quick d-flex">
    <svg class="ic" viewBox="0 0 16 16"><path d="M2 3l9-2 3 2v10l-9 2-3-2z" fill="#e8f2fc" stroke="#1c64b8" stroke-width="1.500"/><path d="M5 6l6-1v5l-6 1z" fill="none" stroke="#1c64b8"/><path d="M9 10l5-8" stroke="#2a8ae0" stroke-width="2"/></svg>
    <svg class="ic"><use href="#foldmag"/></svg>
    <svg class="ic" viewBox="0 0 16 16"><path d="M1 2h11v13H1z" fill="#fbe9c4" stroke="#d8862c"/><circle cx="9" cy="8" r="5.500" fill="#f4d8a0" stroke="#c87a1c"/><path d="M6 7l3 3 3-4" fill="none" stroke="#8a4a0c" stroke-width="1.500"/></svg>
    <svg class="ic" viewBox="0 0 16 16"><rect width="16" height="16" fill="#6f7f9c"/><path d="M1 1h14v13H1z" fill="#dbe6f6"/><path d="M1 1c3 7 6 10 14 12v2H1z" fill="#f0a020"/></svg>
    <svg class="ic" viewBox="0 0 16 16"><path d="M4 .5h11v15H4z" fill="#fff" stroke="#4a6cb4"/><rect y="3" width="12" height="10" rx="1" fill="#dfe9fa" stroke="#4a6cb4"/><path d="M2 5l2 6 2-5 2 5 2-6" fill="none" stroke="#2a4f9c" stroke-width="1.500"/></svg>
    <svg class="ic" viewBox="0 0 16 16"><path d="M4 .5h11v15H4z" fill="#fff" stroke="#3c9044"/><rect y="3" width="12" height="10" rx="1" fill="#e2f4e2" stroke="#3c9044"/><path d="M3 5l6 6M9 5l-6 6" stroke="#1f7a2a" stroke-width="2"/></svg>
    <svg class="ic" viewBox="0 0 16 16"><path d="M4 .5h11v15H4z" fill="#fff" stroke="#d85a3c"/><rect y="3" width="12" height="10" rx="1" fill="#fbe6e0" stroke="#d85a3c"/><circle cx="6" cy="8" r="3" fill="none" stroke="#c8381c" stroke-width="1.500"/></svg>
    <svg class="ic" viewBox="0 0 16 16"><path d="M13 6a5.500 5.500 0 1 0 0 5M3 8.500h11" fill="none" stroke="#2a86dc" stroke-width="2.500"/><path d="M1 15C-1 9 9-1 15 2" fill="none" stroke="#f0b828" stroke-width="1.500"/></svg>
  </div>
  <button class="task d-flex align-items-center"><svg class="ic" viewBox="0 0 16 16"><path d="M2 1h12v10H2z" fill="#d8d8d0" stroke="#333"/><path d="M4 3h8v6H4z" fill="#002800"/><path d="M4 6h2l1-2 2 3 1-1h2" fill="none" stroke="#30e030"/><path d="M1 12.500h14v2H1z" fill="#c8c8c0" stroke="#333"/></svg>Windows Task-Manager</button>
  <button class="task act d-flex align-items-center"><svg class="ic"><use href="#foldmag"/></svg>X:\CONTELO1_DE\7 ...</button>
  <div class="tray d-flex align-items-center ms-auto align-self-stretch">
    <svg class="ic" viewBox="0 0 16 16"><path d="M.5 2.500h13v12H.5z" fill="#f4f4f0" stroke="#c8c8c0"/><circle cx="7" cy="9" r="4" fill="none" stroke="#777" stroke-dasharray="1 2"/><circle cx="13" cy="3" r="2.500" fill="#d04858"/></svg>
    <svg class="ic" viewBox="0 0 16 16"><path d="M6 1h9v8H6z" fill="#3448a8" stroke="#8c94b4"/><path d="M1 5h9v8H1z" fill="#28389c" stroke="#8c94b4"/><path d="M3 15h7" stroke="#777" stroke-width="2"/></svg>
    <svg class="ic"><use href="#mag"/></svg>
    <span class="ic elo dark synced">ELO<svg width="8" height="7"><path d="M1 6c0-3 1-4 4-4M4 0l3 2-3 2" fill="none" stroke="#20d030" stroke-width="1.500"/></svg></span>
    <svg class="ic" viewBox="0 0 16 16"><path d="M3 2h12v12H3z" fill="#064a06" stroke="#0a2a0a"/><path d="M3 4.500h12M3 7h12M3 9.500h12M3 12h12" stroke="#10a018" stroke-dasharray="1 1"/></svg>
    <svg class="ic" viewBox="0 0 16 16"><circle cx="8" cy="8" r="5.500" fill="#f4f4ec" stroke="#444"/><path d="M6 5l5 3-5 3z" fill="#109a18"/><path d="M3 0v5M0 2.500h5" stroke="#e0105c"/><path d="M11 14h4v-3" stroke="#d8b800" stroke-width="2" fill="none"/></svg>
    <time>15:48</time>
  </div>
</div>

<section class="keywords d-flex flex-column" role="dialog" aria-label="Stichwort auswählen/bearbeiten">
  <header class="d-flex align-items-center justify-content-between"><span>Stichwort auswählen/bearbei...</span><button class="shut me-1" aria-label="Schließen"><svg width="8" height="8"><use href="#cx"/></svg></button></header>
  <div class="body flex-grow-1 d-flex flex-column">
    <ul class="flex-grow-1 ps-2">
      <li class="root narrow"><button class="pm me-1" aria-label="Zuklappen"></button>Keywording list for index group LIE</li>
      <li class="d-block h-auto"><ul class="subs">
        <li><button class="pm p" aria-label="Aufklappen"></button><a href="#" class="sel">Audi Zentrum Stuttgart</a></li>
        <li><button class="pm p" aria-label="Aufklappen"></button><a href="#">Automaten Glöckler</a></li>
        <li><button class="pm p" aria-label="Aufklappen"></button><a href="#">Bürodienst Schmitt</a></li>
        <li><button class="pm p" aria-label="Aufklappen"></button><a href="#">EMS Catering</a></li>
        <li><button class="pm p" aria-label="Aufklappen"></button><a href="#">Würth Elektronik</a></li>
      </ul></li>
    </ul>
    <div class="hs d-flex">
      <button class="sbtn left" aria-label="Nach links"><svg width="10" height="8"><use href="#ch"/></svg></button>
      <div class="thumb d-flex align-items-center justify-content-center flex-grow-1"><span class="grip"></span></div>
      <span class="ps-4"></span>
      <button class="sbtn right" aria-label="Nach rechts"><svg width="10" height="8"><use href="#ch"/></svg></button>
    </div>
  </div>
</section>
<script src="https://cdn.jsdelivr.net/npm/bootstrap@5.3.0/dist/js/bootstrap.bundle.min.js"></script>
</body>
</html>
